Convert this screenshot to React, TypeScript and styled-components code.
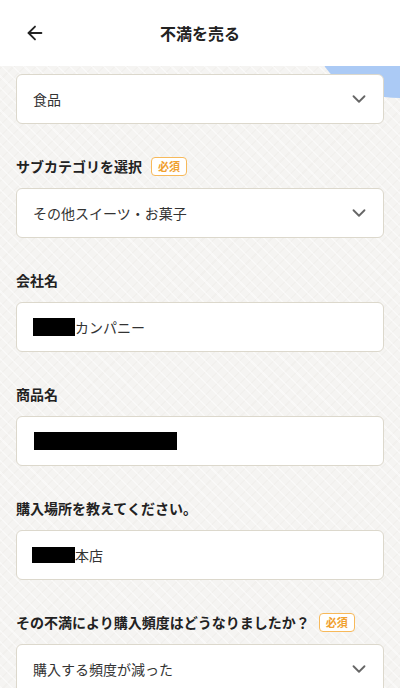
import styled, { createGlobalStyle } from "styled-components";
import { ArrowLeft, ChevronDown } from "lucide-react";

const GlobalStyle = createGlobalStyle`
  html, body {
    margin: 0;
    padding: 0;
    font-family: "Noto Sans CJK JP", "Noto Sans", sans-serif;
    color: #222;
  }
`;

const Page = styled.div`
  width: 400px;
  height: 688px;
  overflow: hidden;
  display: flex;
  flex-direction: column;
`;

const Header = styled.header`
  height: 66px;
  flex-shrink: 0;
  background: #fff;
  display: grid;
  grid-template-columns: 70px 1fr 70px;
  align-items: center;
`;

const BackButton = styled.button`
  border: none;
  background: none;
  padding: 0 0 0 24px;
  display: flex;
  align-items: center;
  color: #222;
`;

const Title = styled.h1`
  margin: 0;
  text-align: center;
  font-size: 16px;
  font-weight: 700;
`;

const Body = styled.main`
  position: relative;
  overflow: hidden;
  flex: 1;
  padding: 8px 16px 0;
  background-color: #f5f4f2;
  background-image:
    repeating-linear-gradient(45deg, rgba(255, 255, 255, 0.45) 0 1.5px, transparent 1.5px 8px),
    repeating-linear-gradient(-45deg, rgba(236, 234, 230, 0.35) 0 1.5px, transparent 1.5px 8px);
`;

const Blob = styled.div`
  position: absolute;
  top: -64px;
  right: -80px;
  width: 160px;
  height: 96px;
  background: #abcaf5;
  border-radius: 50%;
`;

const Form = styled.div`
  position: relative;
  display: flex;
  flex-direction: column;
`;

const Field = styled.div`
  display: flex;
  flex-direction: column;
  margin-bottom: 32px;
`;

const LabelRow = styled.div`
  height: 20px;
  display: flex;
  align-items: center;
  gap: 9px;
  margin-bottom: 12px;
`;

const Label = styled.span`
  font-size: 14px;
  font-weight: 700;
  color: #222;
`;

const Required = styled.span`
  height: 19px;
  box-sizing: border-box;
  padding: 0 6px;
  border: 1.5px solid #f7b95a;
  border-radius: 4px;
  color: #f0a02e;
  font-size: 11px;
  font-weight: 700;
  display: flex;
  align-items: center;
  background: #fff;
`;

const Box = styled.div`
  height: 50px;
  box-sizing: border-box;
  background: #fff;
  border: 1px solid #dcd8cc;
  border-radius: 6px;
  padding: 0 13px 0 16px;
  display: flex;
  align-items: center;
  justify-content: space-between;
  font-size: 14px;
  color: #333;
`;

const Value = styled.span`
  display: flex;
  align-items: center;
`;

const Redact = styled.span<{ $w: number; $h: number }>`
  display: inline-block;
  width: ${(p) => p.$w}px;
  height: ${(p) => p.$h}px;
  background: #000;
`;

type F = {
  label: string;
  required?: boolean;
  select?: boolean;
  redact?: [number, number];
  text?: string;
  shift?: number;
};

const fields: F[] = [
  { label: "サブカテゴリを選択", required: true, select: true, text: "その他スイーツ・お菓子" },
  { label: "会社名", redact: [42, 18], text: "カンパニー" },
  { label: "商品名", redact: [143, 18], text: "", shift: 1 },
  { label: "購入場所を教えてください。", redact: [43, 16], text: "本店", shift: -1 },
  { label: "その不満により購入頻度はどうなりましたか？", required: true, select: true, text: "購入する頻度が減った" },
];

export default function App() {
  return (
    <>
      <GlobalStyle />
      <Page>
        <Header>
          <BackButton aria-label="戻る">
            <ArrowLeft size={22} strokeWidth={2} />
          </BackButton>
          <Title>不満を売る</Title>
          <span />
        </Header>
        <Body>
          <Blob />
          <Form>
            <Field>
              <Box>
                <Value>食品</Value>
                <ChevronDown size={22} strokeWidth={2} color="#666" />
              </Box>
            </Field>
            {fields.map((f) => (
              <Field key={f.label}>
                <LabelRow>
                  <Label>{f.label}</Label>
                  {f.required && <Required>必須</Required>}
                </LabelRow>
                <Box>
                  <Value style={f.shift ? { marginLeft: f.shift } : undefined}>
                    {f.redact && <Redact $w={f.redact[0]} $h={f.redact[1]} />}
                    {f.text}
                  </Value>
                  {f.select && <ChevronDown size={22} strokeWidth={2} color="#666" />}
                </Box>
              </Field>
            ))}
          </Form>
        </Body>
      </Page>
    </>
  );
}
